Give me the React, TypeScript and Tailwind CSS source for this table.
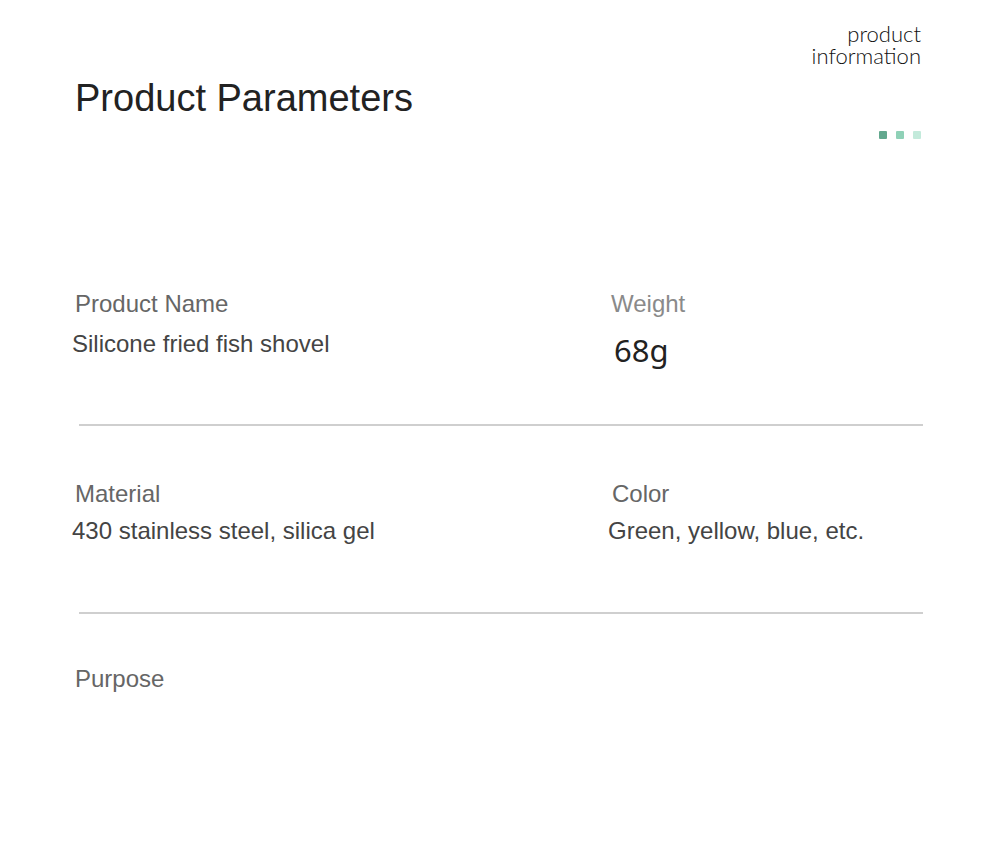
const rows = [
  {
    left: { label: 'Product Name', value: 'Silicone fried fish shovel' },
    right: { label: 'Weight', value: '68g' },
  },
];

const App = () => {
  return (
    <div className="w-[1000px] h-[853px] bg-white pl-[75px] pr-[79px] font-['Liberation_Sans',Arial,sans-serif] overflow-hidden">
      {/* Header */}
      <div className="flex justify-between items-start h-[150px]">
        <h1 className="mt-[79px] text-[38px] leading-none text-[#222] font-normal">Product Parameters</h1>
        <div className="flex flex-col items-end pt-[23px] font-['Lato',sans-serif] font-light text-[22px] leading-[22px] text-[#111]">
          <div>product</div>
          <div>information</div>
          <div className="flex gap-[9px] mt-[64px]">
            <span className="w-[8px] h-[8px] rounded-[1px] bg-[#62a88e]" />
            <span className="w-[8px] h-[8px] rounded-[1px] bg-[#8fd1b7]" />
            <span className="w-[8px] h-[8px] rounded-[1px] bg-[#c3eadb]" />
          </div>
        </div>
      </div>

      {/* Row 1 */}
      <div className="grid grid-cols-[536px_1fr] items-start mt-[142px]">
        <div>
          <div className="text-[24px] leading-none text-[#666]">{rows[0].left.label}</div>
          <div className="mt-[16px] -ml-[3px] text-[24px] leading-none text-[#444]">{rows[0].left.value}</div>
        </div>
        <div>
          <div className="text-[24px] leading-none text-[#8a8a8a]">{rows[0].right.label}</div>
          <div className="mt-[19px] ml-[3px] text-[31px] leading-none text-[#222] font-['Noto_Sans',sans-serif]">
            {rows[0].right.value}
          </div>
        </div>
      </div>

      <div className="mt-[58px] ml-[4px] -mr-[2px] h-[2px] bg-[#cfcfcf]" />

      {/* Row 2 */}
      <div className="grid grid-cols-[536px_1fr] items-start mt-[56px]">
        <div>
          <div className="text-[24px] leading-none text-[#666]">Material</div>
          <div className="mt-[13px] -ml-[3px] text-[24px] leading-none text-[#444]">430 stainless steel, silica gel</div>
        </div>
        <div>
          <div className="ml-[1px] text-[24px] leading-none text-[#666]">Color</div>
          <div className="mt-[13px] -ml-[3px] text-[24px] leading-none text-[#444]">Green, yellow, blue, etc.</div>
        </div>
      </div>

      <div className="mt-[69px] ml-[4px] -mr-[2px] h-[2px] bg-[#cfcfcf]" />

      {/* Row 3 */}
      <div className="mt-[53px] text-[24px] leading-none text-[#666]">Purpose</div>
    </div>
  );
};

export default App;
